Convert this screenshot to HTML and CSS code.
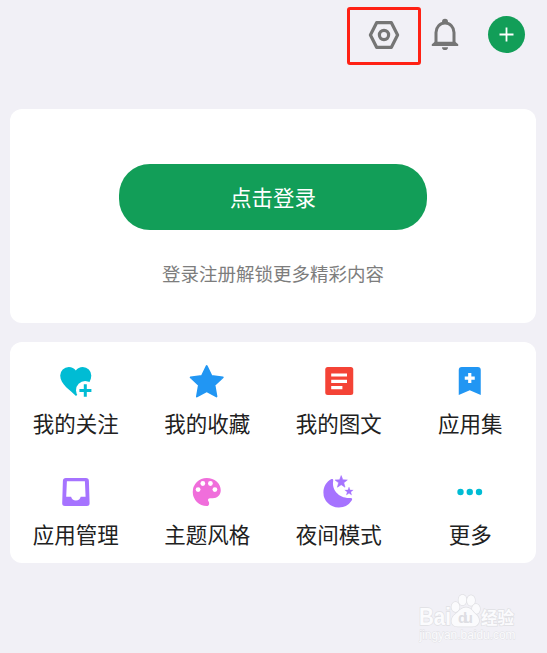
FILE: index.html
```
<!DOCTYPE html>
<html lang="zh-CN">
<head>
    <meta charset="UTF-8">
    <meta name="viewport" content="width=device-width, initial-scale=1.0">
    <title>我的</title>
    <link rel="stylesheet" href="styles.css">
</head>
<body>
    <div class="container">
        <header class="topbar">
            <button class="icon-button highlight" aria-label="设置">
                <svg width="34" height="34" viewBox="0 0 34 34" fill="none" stroke="#757575" stroke-width="3.2" stroke-linejoin="round">
                    <path d="M9.6 4.7h14.8l6.2 12.3-6.2 12.3H9.6L3.4 17z"/>
                    <circle cx="17" cy="17" r="4.6"/>
                </svg>
            </button>
            <button class="icon-button bell" aria-label="通知">
                <svg width="28" height="34" viewBox="0 0 28 34">
                    <path d="M5 26.5V15.5a9 9.5 0 0 1 18 0v11" fill="none" stroke="#757575" stroke-width="3"/>
                    <path d="M.8 27.3l3-2.6h20.4l3 2.6v1.6H.8zM11 7V5a3 3.2 0 0 1 6 0v2zM11 30.3h6a3 2.8 0 0 1-6 0z" fill="#757575"/>
                </svg>
            </button>
            <button class="add-button" aria-label="添加">
                <svg width="37" height="37" viewBox="0 0 37 37">
                    <path d="M18.5 11.5v14M11.5 18.5h14" stroke="#fff" stroke-width="1.8"/>
                </svg>
            </button>
        </header>

        <section class="card login">
            <button class="login-button">点击登录</button>
            <p class="login-hint">登录注册解锁更多精彩内容</p>
        </section>

        <nav class="card menu">
            <a class="menu-item">
                <svg class="menu-icon" viewBox="0 0 40 40">
                    <path d="M20 35C15 30 4.2 23.5 4.2 14.6A8.6 8.6 0 0 1 12.8 6c3 0 5.4 1.3 7 3.6 1.6-2.3 4-3.6 7-3.6a8.6 8.6 0 0 1 8.5 8.6c0 8.9-10.3 15.4-15.3 20.4z" fill="#00bcd4"/>
                    <circle cx="29.2" cy="29.2" r="9.2" fill="#fff"/>
                    <path d="M29.3 23.3v12.4M23.4 29.5h12" stroke="#00bcd4" stroke-width="3"/>
                </svg>
                <span>我的关注</span>
            </a>
            <a class="menu-item">
                <svg class="menu-icon" viewBox="0 0 40 40">
                    <path d="M19.7 5l4.8 10 11.3 1.3-8.3 7.7 2 11.5-9.8-5.3-9.8 5.3L11.9 24l-8.3-7.7L14.9 15z" fill="#2196f3" stroke="#2196f3" stroke-width="1.8" stroke-linejoin="round"/>
                </svg>
                <span>我的收藏</span>
            </a>
            <a class="menu-item">
                <svg class="menu-icon" viewBox="0 0 40 40">
                    <rect x="6.25" y="6" width="28" height="28" rx="2.5" fill="#f44336"/>
                    <path d="M12.2 14h15.8M12.2 20.4h15.8M12.2 26.7h11.2" stroke="#fff" stroke-width="3.2"/>
                </svg>
                <span>我的图文</span>
            </a>
            <a class="menu-item">
                <svg class="menu-icon" viewBox="0 0 40 40">
                    <path d="M8.75 34V9a3 3 0 0 1 3-3h16a3 3 0 0 1 3 3v25l-11-4.7z" fill="#2196f3"/>
                    <path d="M19.75 12.1v10M14.75 17.1h10" stroke="#fff" stroke-width="3.2"/>
                </svg>
                <span>应用集</span>
            </a>
            <a class="menu-item">
                <svg class="menu-icon" viewBox="0 0 40 40">
                    <path d="M9.9 6h20a3 3 0 0 1 3 2.8l.7 22.2a2.8 2.8 0 0 1-2.8 3H9a2.8 2.8 0 0 1-2.8-3l.7-22.2A3 3 0 0 1 9.9 6zM10.9 9.2L10.2 24.8h4.9a4.9 4.6 0 0 0 9.6 0h4.9L28.9 9.2z" fill="#a673ff" fill-rule="evenodd"/>
                </svg>
                <span>应用管理</span>
            </a>
            <a class="menu-item">
                <svg class="menu-icon" viewBox="0 0 40 40">
                    <path d="M19.75 6c7.8 0 14 5.4 14 12.2 0 4.8-3.6 8-8 8h-2.6c-2 0-2.8 1.6-1.6 3.2 1 1.2 1 4.6-1.8 4.6a14 14 0 0 1 0-28z" fill="#f06edb"/>
                    <g fill="#fff">
                        <circle cx="11.1" cy="17.6" r="2.4"/>
                        <circle cx="15.8" cy="11.5" r="2.4"/>
                        <circle cx="23.4" cy="11.5" r="2.4"/>
                        <circle cx="27.9" cy="17.6" r="2.4"/>
                    </g>
                </svg>
                <span>主题风格</span>
            </a>
            <a class="menu-item">
                <svg class="menu-icon" viewBox="0 0 40 40">
                    <g fill="#a673ff">
                        <path d="M12 7.2c1.6-.6 2.4 0 2.2 1.6C12.5 18 20 26.5 31 26c2.3-.2 2.7.8 1.7 2.5A15.3 15.3 0 0 1 19.5 35.5 15.1 15.1 0 0 1 4.4 20.4C4.400 14.500 7.500 9.500 12 7.200z"/>
                        <path d="M22.2 3.6l1.6 4.2 4.5.2-3.5 2.8 1.2 4.4-3.8-2.5-3.8 2.5 1.2-4.4-3.5-2.8 4.5-.2z" stroke="#a673ff" stroke-width=".6"/>
                        <path d="M30 15.1l1.1 2.9 3.1.1-2.4 1.9.8 3-2.600-1.700-2.600 1.700.8-3-2.400-1.900 3.100-.1z" stroke="#a673ff" stroke-width=".3"/>
                    </g>
                </svg>
                <span>夜间模式</span>
            </a>
            <a class="menu-item">
                <svg class="menu-icon" viewBox="0 0 40 40" fill="#00bcd4">
                    <circle cx="10.5" cy="20" r="3.2"/>
                    <circle cx="19.75" cy="20" r="3.2"/>
                    <circle cx="29" cy="20" r="3.2"/>
                </svg>
                <span>更多</span>
            </a>
        </nav>
    </div>

    <svg class="watermark" width="108" height="58" viewBox="0 0 108 58">
        <g class="mark">
            <text class="brand" x="4" y="33" textLength="32" lengthAdjust="spacingAndGlyphs">Bai</text>
            <ellipse cx="40.5" cy="15" rx="4" ry="5"/>
            <ellipse cx="47.5" cy="8" rx="4" ry="5.3"/>
            <ellipse cx="56" cy="8.5" rx="4" ry="5.3"/>
            <ellipse cx="61" cy="17" rx="4" ry="5"/>
            <path d="M51 15.5c5 0 6.5 4 9.5 6.500 6 5 4 12.500-3 12.500H42.500c-7 0-8-8-2-12.500 3.500-2.500 5.500-6.500 10.500-6.500z"/>
            <text class="du" x="43" y="31" textLength="15">du</text>
            <text class="cn" x="66" y="32">经验</text>
            <text class="site" x="4.500" y="46.500" textLength="96" lengthAdjust="spacingAndGlyphs">jingyan.baidu.com</text>
        </g>
    </svg>
</body>
</html>
```
FILE: styles.css
```
:root {
    --page-bg: #f1f0f6;
    --green: #129e58;
    --gray: #7d7d7d;
    --text: #212121;
}

* {
    margin: 0;
    padding: 0;
    box-sizing: border-box;
}

body {
    background: var(--page-bg);
    color: var(--text);
    font-family: "Noto Sans CJK SC", sans-serif;
    min-height: 100vh;
}

button {
    border: none;
    background: none;
    font-family: inherit;
    cursor: pointer;
}

svg {
    display: block;
}

.container {
    padding: 7px 11px 0 10px;
}

.topbar {
    display: flex;
    justify-content: flex-end;
    align-items: flex-start;
    height: 102px;
}

.icon-button {
    display: flex;
    justify-content: center;
    align-items: center;
    height: 58px;
}

.highlight {
    width: 74px;
    border: 3px solid #ff2114;
    border-radius: 3px;
    padding-bottom: 2px;
}

.bell {
    width: 28px;
    margin-left: 10px;
    padding-bottom: 4px;
}

.add-button {
    width: 37px;
    height: 37px;
    margin: 9px 11px 0 29px;
    border-radius: 50%;
    background: var(--green);
}

.card {
    background: #fff;
    border-radius: 12px;
}

.login {
    height: 214px;
    padding-top: 55px;
    text-align: center;
}

.login-button {
    width: 308px;
    height: 66px;
    padding-bottom: 2px;
    border-radius: 31px;
    background: var(--green);
    color: #fff;
    font-size: 21.5px;
}

.login-hint {
    margin-top: 29px;
    line-height: 28px;
    font-size: 18.5px;
    color: var(--gray);
}

.menu {
    display: grid;
    grid-template-columns: repeat(4, 1fr);
    grid-auto-rows: 111px;
    height: 221px;
    margin-top: 19px;
    padding-top: 19px;
}

.menu-item {
    display: flex;
    flex-direction: column;
    align-items: center;
    gap: 6px;
    font-size: 21.5px;
    line-height: 32px;
}

.menu-icon {
    width: 40px;
    height: 40px;
}

.watermark {
    position: absolute;
    right: 24px;
    bottom: 3px;
}

.mark {
    fill: #fbfbfd;
    stroke: #e0e0e4;
    stroke-width: 1.4;
    paint-order: stroke;
    font-family: "Liberation Sans", sans-serif;
    font-weight: bold;
}

.brand {
    font-size: 24px;
}

.du {
    font-size: 15px;
    fill: #dedee3;
    stroke: none;
}

.cn {
    font-family: "Noto Sans CJK SC", sans-serif;
    font-size: 16.5px;
}

.site {
    font-size: 12px;
    font-weight: normal;
    stroke-width: 0.8;
}
```
